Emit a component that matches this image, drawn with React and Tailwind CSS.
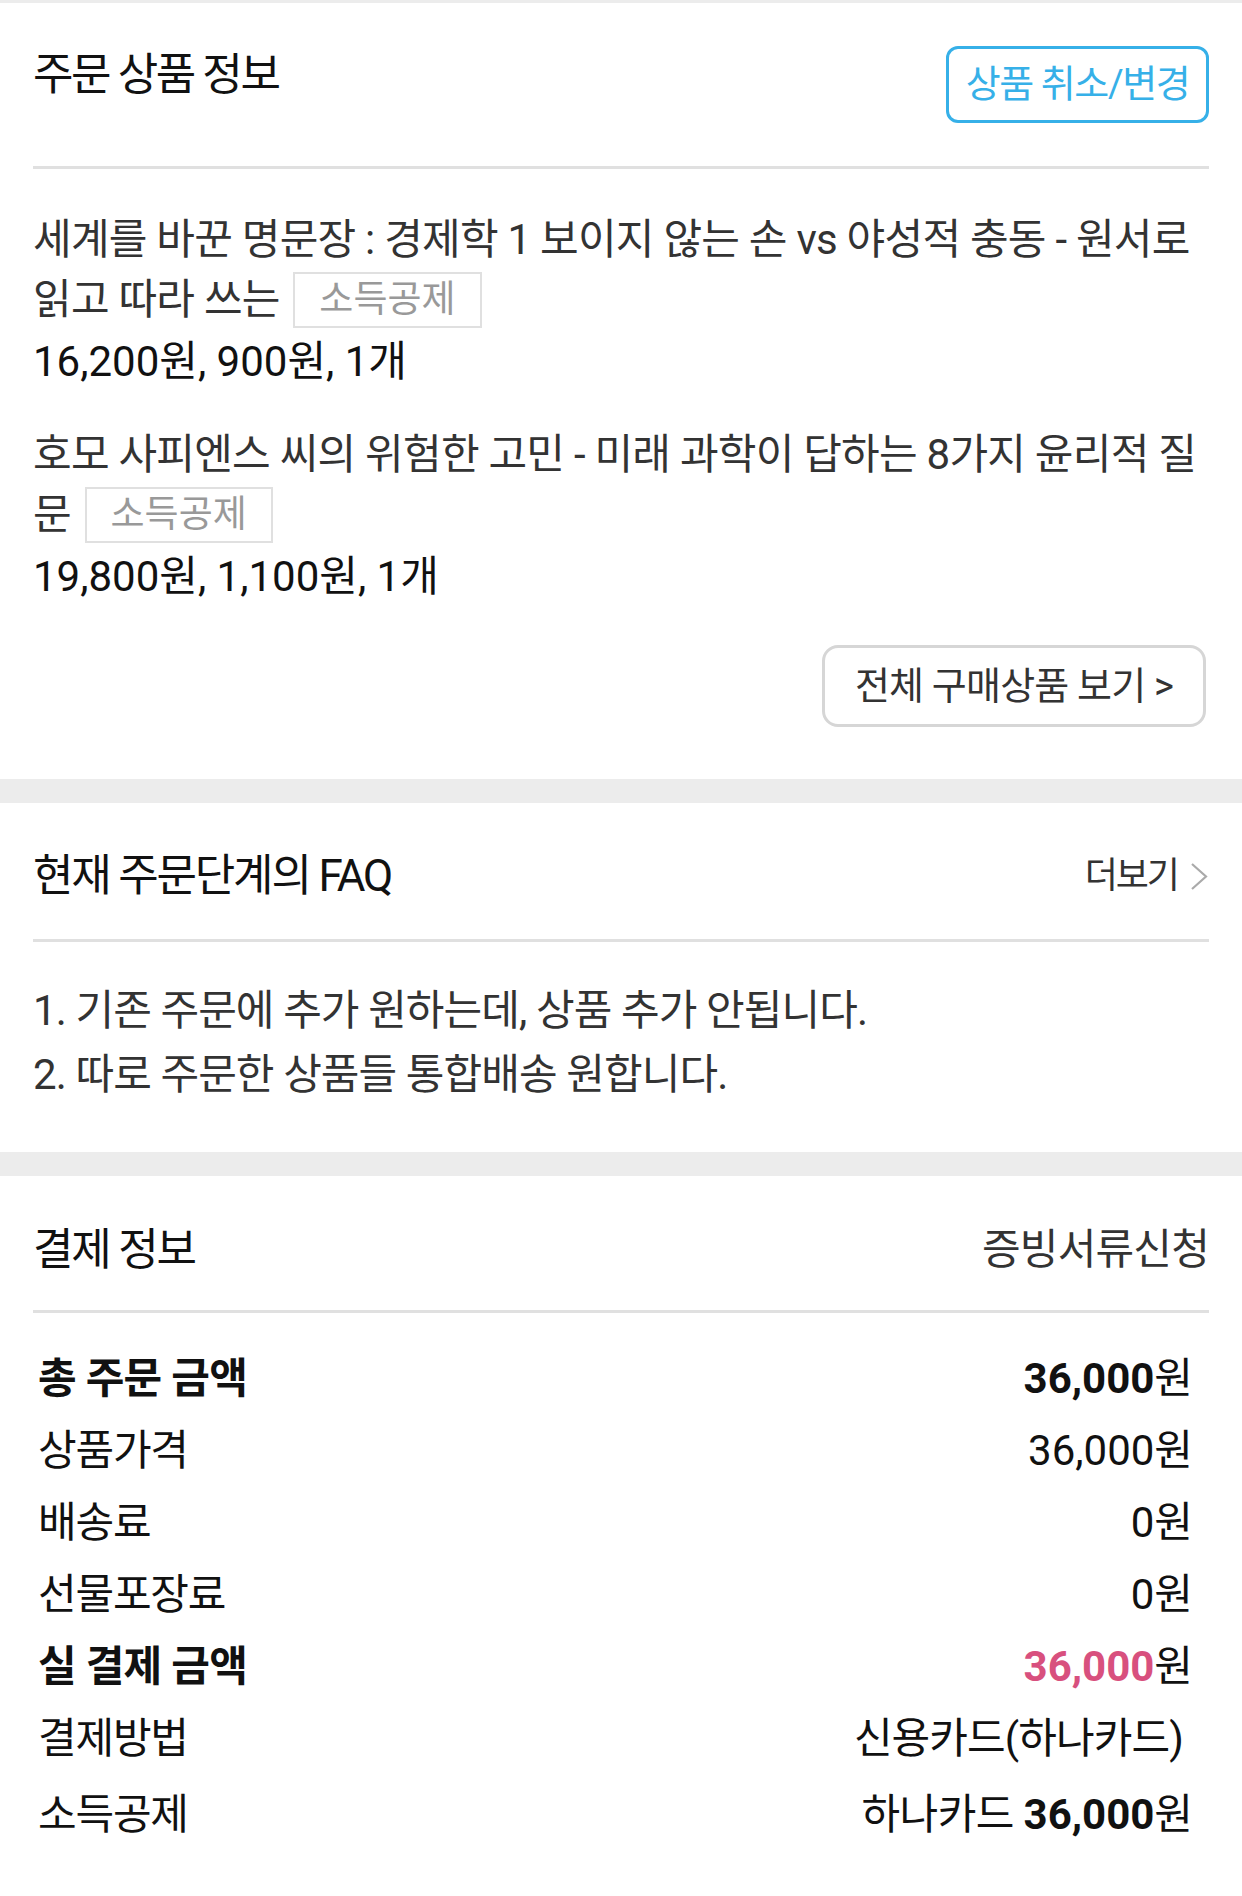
const products = [
  {
    title: '세계를 바꾼 명문장 : 경제학 1 보이지 않는 손 vs 야성적 충동 - 원서로 읽고 따라 쓰는',
    price: '16,200원, 900원, 1개',
  },
  {
    title: '호모 사피엔스 씨의 위험한 고민 - 미래 과학이 답하는 8가지 윤리적 질문',
    price: '19,800원, 1,100원, 1개',
  },
];

const faqs = ['1. 기존 주문에 추가 원하는데, 상품 추가 안됩니다.', '2. 따로 주문한 상품들 통합배송 원합니다.'];

const Divider = () => <div className="h-[3px] bg-[#e0e0e0]" />;

const Band = () => <div className="h-[24px] bg-[#ececec]" />;

const Tag = () => (
  <span className="inline-flex items-center align-top mt-[2px] ml-[4px] h-[56px] px-[24px] border-2 border-[#e0e0e0] text-[37px] leading-[52px] tracking-[0px] text-[#999]">
    소득공제
  </span>
);

const Row = ({ label, value, bold, className = '' }) => (
  <div className={`flex h-[72px] items-center justify-between ${className}`}>
    <span className={`text-[42px] leading-[58px] text-[#111] ${bold ? 'font-bold tracking-[-0.7px]' : 'tracking-[-1.2px]'}`}>{label}</span>
    <span className="text-[42px] leading-[58px] text-[#111] tracking-[0px]">{value}</span>
  </div>
);

export default function App() {
  return (
    <div className="w-full min-h-[1896px] bg-white border-t-[3px] border-[#ececec] font-['Roboto','Noto_Sans_CJK_KR',sans-serif]">
      {/* 주문 상품 정보 */}
      <section className="px-[33px]">
        <div className="flex items-start justify-between pt-[43px] pb-[43px]">
          <h2 className="text-[44px] leading-[58px] tracking-[-2.4px] text-[#111]">주문 상품 정보</h2>
          <button className="flex h-[77px] w-[263px] items-center justify-center rounded-[12px] border-[3px] border-[#36b0e8] text-[38px] tracking-[-1.4px] text-[#36b0e8]">
            상품 취소/변경
          </button>
        </div>
        <Divider />
        <div className="pt-[41px]">
          {products.map((p, i) => (
            <div key={i} className={i > 0 ? 'mt-[33px]' : ''}>
              <p className="text-[42px] leading-[60px] tracking-[-0.75px] text-[#333]">
                {p.title} <Tag />
              </p>
              <p className="mt-[2px] text-[42px] leading-[60px] text-[#111]">{p.price}</p>
            </div>
          ))}
        </div>
        <div className="flex justify-end pt-[38px] pb-[52px] pr-[3px]">
          <button className="flex h-[82px] w-[384px] items-center justify-center rounded-[16px] border-[3px] border-[#d6d6d6] text-[38px] tracking-[-0.8px] text-[#333]">
            전체 구매상품 보기 &gt;
          </button>
        </div>
      </section>

      <Band />

      {/* FAQ */}
      <section className="px-[33px]">
        <div className="flex items-center justify-between pt-[44px] pb-[34px]">
          <h2 className="text-[44px] leading-[58px] tracking-[-2.2px] text-[#111]">현재 주문단계의 FAQ</h2>
          <div className="flex items-center gap-[12px]">
            <span className="text-[36px] leading-[58px] tracking-[-2px] text-[#333]">더보기</span>
            <svg width="19" height="29" viewBox="0 0 19 29" fill="none">
              <polyline points="2,2 16,14.5 2,27" stroke="#aaa" strokeWidth="2.2" />
            </svg>
          </div>
        </div>
        <Divider />
        <div className="pt-[37px] pb-[45px]">
          {faqs.map((f) => (
            <p key={f} className="text-[42px] leading-[64px] tracking-[-0.9px] text-[#333]">
              {f}
            </p>
          ))}
        </div>
      </section>

      <Band />

      {/* 결제 정보 */}
      <section className="px-[33px] pb-[40px]">
        <div className="flex items-center justify-between pt-[45px] pb-[31px]">
          <h2 className="text-[44px] leading-[58px] tracking-[-2.2px] text-[#111]">결제 정보</h2>
          <span className="text-[42px] leading-[58px] tracking-[-0.8px] text-[#333]">증빙서류신청</span>
        </div>
        <Divider />
        <div className="pt-[30px] pl-[5px] pr-[16px]">
          <Row label="총 주문 금액" bold value={<><b className="font-bold">36,000</b>원</>} />
          <Row label="상품가격" value="36,000원" />
          <Row label="배송료" value="0원" />
          <Row label="선물포장료" value="0원" />
          <Row label="실 결제 금액" bold value={<><b className="font-bold text-[#d8507e]">36,000</b>원</>} />
          <Row label="결제방법" value={<span className="mr-[10px] tracking-[-0.9px]">신용카드(하나카드)</span>} />
          <Row label="소득공제" className="mt-[4px]" value={<><span className="tracking-[-0.6px]">하나카드 </span><b className="font-bold">36,000</b>원</>} />
        </div>
      </section>
    </div>
  );
}
